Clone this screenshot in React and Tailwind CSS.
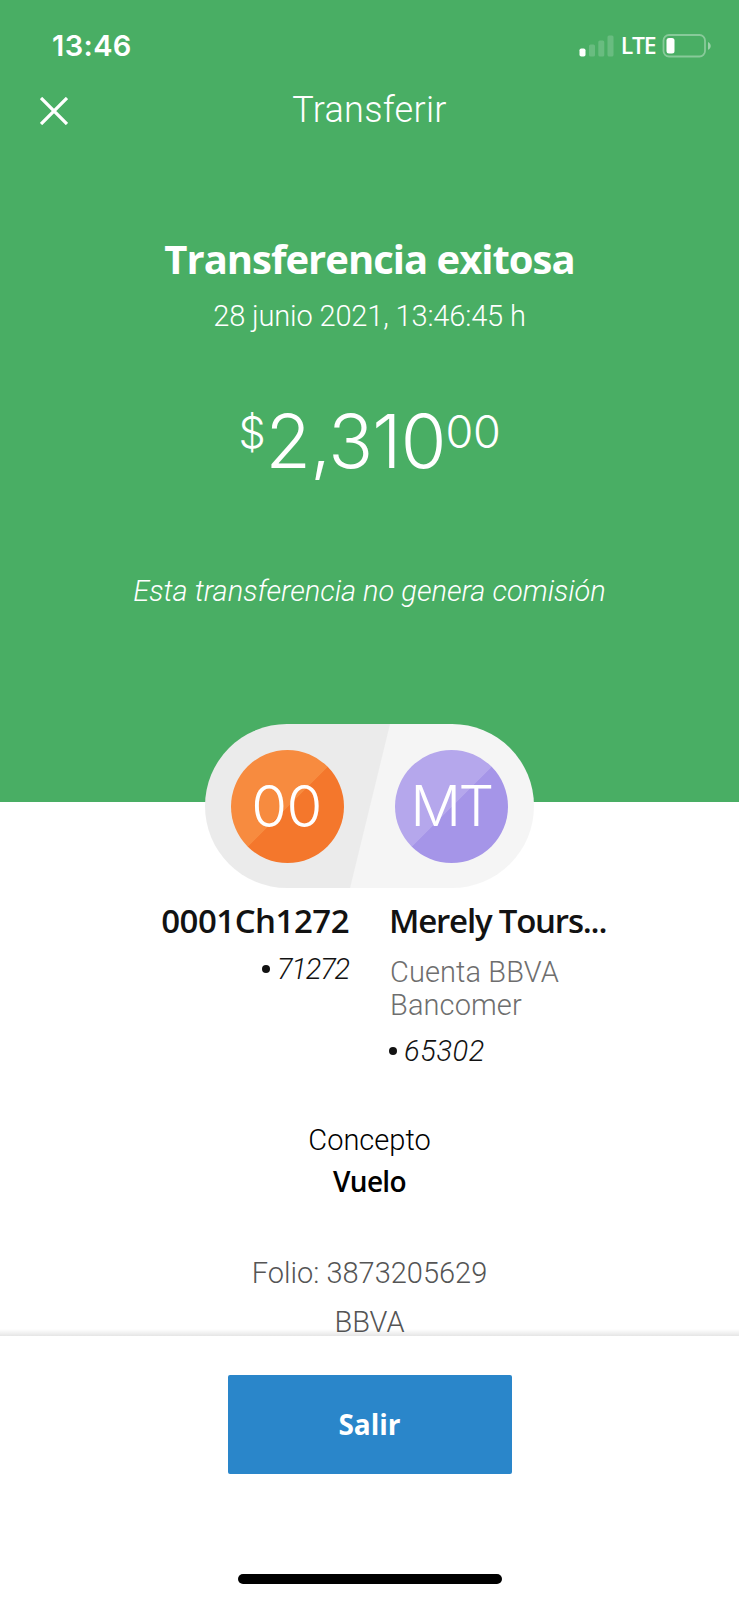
function StatusBar() {
  return (
    <div className="flex h-[91px] items-center justify-between pr-[28px] pl-[52px]">
      <span className="font-['Inter',sans-serif] text-[29px] leading-none font-semibold tracking-[0.4px]">13:46</span>
      <div className="flex items-center">
        <svg width="35" height="22" viewBox="0 0 35 22" fill="#fff">
          <rect x="0.5" y="13.500" width="6" height="8" rx="1.8" />
          <rect x="10" y="9.500" width="6" height="12" rx="1.5" opacity="0.18" />
          <rect x="19.3" y="5.500" width="6" height="16" rx="1.5" opacity="0.18" />
          <rect x="28.5" y="0.500" width="6" height="21" rx="1.5" opacity="0.18" />
        </svg>
        <span className="ml-[6px] w-[36px] font-['Open_Sans',sans-serif] text-[23px] leading-none font-semibold tracking-[-1.2px]">LTE</span>
        <svg className="ml-[6px]" width="49" height="24" viewBox="0 0 49 24" fill="none">
          <rect x="1.500" y="1" width="41.5" height="21.5" rx="5.5" stroke="#fff" strokeOpacity="0.35" strokeWidth="1.8" />
          <rect x="4.500" y="4" width="8" height="15.5" rx="2.5" fill="#fff" />
          <path d="M46 8c3.600 1.500 3.600 6.300 0 7.800z" fill="#fff" fillOpacity="0.45" />
        </svg>
      </div>
    </div>
  );
}

function Header() {
  return (
    <div className="grid h-[37px] grid-cols-[100px_1fr_100px] items-center">
      <svg className="mt-[2px] ml-[40px]" width="28" height="28" viewBox="0 0 28 28" stroke="#fff" strokeWidth="3.3" fill="none">
        <path d="M1 1l26 26M27 1l-26 26" />
      </svg>
      <h1 className="text-center text-[36px] leading-none font-light tracking-[0.3px]">Transferir</h1>
    </div>
  );
}

function Avatar({ label, className }) {
  return (
    <div
      className={`flex size-[113px] items-center justify-center rounded-full font-['Inter',sans-serif] leading-none font-light text-white ${className}`}
    >
      {label}
    </div>
  );
}

export default function App() {
  return (
    <div className="h-[1600px] w-[739px] overflow-hidden bg-white font-['Roboto',sans-serif] text-[#121212]">
      <div className="relative h-[1336px] overflow-hidden">
        <section className="h-[802px] bg-[#49ae64] text-center text-white">
          <StatusBar />
          <Header />
          <h2 className="mt-[107px] font-['Open_Sans',sans-serif] text-[40px] leading-[48px] font-bold tracking-[-1px]">Transferencia exitosa</h2>
          <p className="mt-[13px] text-[29px] leading-[40px] font-light tracking-[-0.15px]">28 junio 2021, 13:46:45 h</p>
          <div className="mt-[55px] flex h-[100px] justify-center font-['Inter',sans-serif] font-light">
            <span className="mt-[19px] text-[43px] leading-[44px]">$</span>
            <span className="text-[74px] leading-[100px] tracking-[-0.8px]">2,310</span>
            <span className="mt-[19px] text-[45px] leading-[44px] tracking-[-0.3px]">00</span>
          </div>
          <p className="mt-[80px] text-[29px] leading-[40px] font-light italic">Esta transferencia no genera comisión</p>
        </section>

        <section>
          <div className="mx-auto -mt-[78px] flex h-[164px] w-[329px] items-center gap-[51px] rounded-full bg-[linear-gradient(103.7deg,#ebebeb_50%,#f5f5f5_50.3%)] pl-[26px]">
            <Avatar label="00" className="bg-[linear-gradient(135deg,#f78b3f_50%,#f4772c_50.5%)] pr-[2px] pb-px text-[58px] tracking-[-0.5px]" />
            <Avatar label="MT" className="bg-[linear-gradient(135deg,#b5a7ec_50%,#a595e8_50.5%)] pr-px pb-px text-[56px] tracking-[-2.5px]" />
          </div>

          <div className="mt-[13px] grid h-[171px] grid-cols-[349px_1fr] gap-[41px]">
            <div className="text-right">
              <p className="font-['Open_Sans',sans-serif] text-[33px] leading-[40px] font-semibold tracking-[-0.5px]">0001Ch1272</p>
              <p className="mt-[8px] flex items-center justify-end gap-[7px] text-[29px] leading-[40px] font-light tracking-[-1.2px] italic">
                <span className="size-[8px] rounded-full bg-[#121212]" />
                71272
              </p>
            </div>
            <div>
              <p className="-ml-px font-['Open_Sans',sans-serif] text-[33px] leading-[40px] font-semibold tracking-[-1.2px]">Merely Tours...</p>
              <p className="mt-[15px] w-[180px] text-[29px] leading-[33px] font-light tracking-[0.1px] text-[#6e6e6e]">Cuenta BBVA Bancomer</p>
              <p className="mt-[9px] flex items-center gap-[7px] text-[29px] leading-[40px] font-light tracking-[0.6px] italic">
                <span className="-ml-px size-[8px] rounded-full bg-[#121212]" />
                65302
              </p>
            </div>
          </div>

          <div className="mt-[48px] text-center text-[29px] leading-[40px]">
            <p className="font-light text-black">Concepto</p>
            <p className="mt-px font-['Open_Sans',sans-serif] text-[28px] font-semibold tracking-[-0.7px] text-black">Vuelo</p>
            <p className="mt-[52px] font-light text-[#555]">Folio: 3873205629</p>
            <p className="mt-[9px] font-light text-[#555]">BBVA</p>
          </div>
        </section>
        <div className="absolute inset-x-0 bottom-0 h-[7px] bg-linear-to-b from-black/0 to-black/10" />
      </div>

      <footer className="flex h-[264px] flex-col items-center bg-white pt-[39px]">
        <button className="h-[99px] w-[284px] rounded-[2px] bg-[#2a86ca] pb-[2px] font-['Open_Sans',sans-serif] text-[28px] font-bold text-white">Salir</button>
        <div className="mt-[100px] h-[10px] w-[264px] rounded-full bg-black" />
      </footer>
    </div>
  );
}
